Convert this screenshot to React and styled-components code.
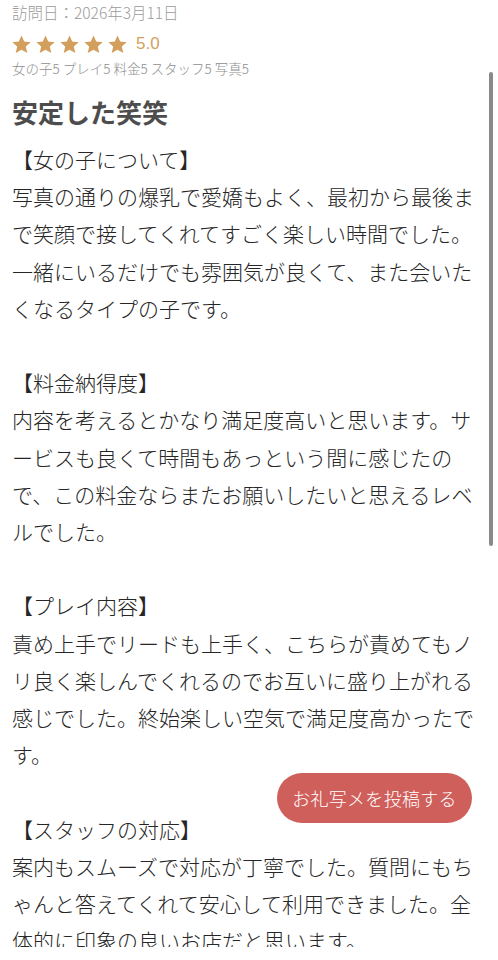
import React from "react";
import styled, { createGlobalStyle } from "styled-components";

const GlobalStyle = createGlobalStyle`
    html, body {
        margin: 0;
        padding: 0;
        background: #ffffff;
    }
    body {
        font-family: "Noto Sans CJK JP", "Noto Sans", sans-serif;
        overflow: hidden;
    }
`;

const Page = styled.div`
    padding: 2px 12px 0 12px;
    height: 958px;
    overflow: hidden;
`;

const VisitDate = styled.div`
    font-size: 15.5px;
    line-height: 20px;
    font-weight: 300;
    color: #9b9b9b;
`;

const RatingRow = styled.div`
    display: flex;
    align-items: center;
    height: 24px;
    margin-top: 10px;
`;

const Stars = styled.div`
    display: flex;
    gap: 3px;
    margin-left: -1px;
`;

const Score = styled.span`
    margin-left: 8px;
    font-family: "Liberation Sans", "Noto Sans CJK JP", sans-serif;
    font-size: 17px;
    color: #d29f5d;
`;

const SubRatings = styled.div`
    margin-top: 3px;
    font-size: 13.5px;
    line-height: 18px;
    font-weight: 300;
    color: #8e8e8e;
`;

const Title = styled.h2`
    margin: 17px 0 0 0;
    font-size: 26px;
    line-height: 36px;
    font-weight: 700;
    color: #4d4d4d;
`;

const Body = styled.div`
    margin-top: 11px;
    width: 474px;
    font-size: 21px;
    line-height: 37.2px;
    font-weight: 300;
    color: #262626;
    white-space: pre-wrap;
    line-break: normal;
`;

const ScrollIndicator = styled.div`
    position: fixed;
    top: 72px;
    right: 5px;
    width: 4px;
    height: 474px;
    border-radius: 2px;
    background: #8a8a8a;
`;

const PostButton = styled.button`
    position: fixed;
    right: 26px;
    bottom: 137px;
    width: 195px;
    height: 50px;
    border: none;
    border-radius: 25px;
    background: #cf5f5b;
    color: #ffffff;
    font-family: "Noto Sans CJK JP", sans-serif;
    font-size: 18px;
    font-weight: 300;
    letter-spacing: 0.3px;
    cursor: pointer;
`;

const BottomBar = styled.div`
    position: fixed;
    left: 0;
    right: 0;
    bottom: 0;
    height: 13px;
    background: #ffffff;
`;

const Star = () => (
    <svg width="21" height="21" viewBox="0 0 24 24">
        <path
            d="M12 1.8l3.1 6.9 7.4.7-5.6 5 1.7 7.4L12 17.9l-6.6 3.9 1.7-7.4-5.6-5 7.4-.7z"
            fill="#d29f5d"
        />
    </svg>
);

const review = `【女の子について】
写真の通りの爆乳で愛嬌もよく、最初から最後まで笑顔で接してくれてすごく楽しい時間でした。一緒にいるだけでも雰囲気が良くて、また会いたくなるタイプの子です。

【料金納得度】
内容を考えるとかなり満足度高いと思います。サービスも良くて時間もあっという間に感じたので、この料金ならまたお願いしたいと思えるレベルでした。

【プレイ内容】
責め上手でリードも上手く、こちらが責めてもノリ良く楽しんでくれるのでお互いに盛り上がれる感じでした。終始楽しい空気で満足度高かったです。

【スタッフの対応】
案内もスムーズで対応が丁寧でした。質問にもちゃんと答えてくれて安心して利用できました。全体的に印象の良いお店だと思います。`;

const App = () => {
    return (
        <>
            <GlobalStyle />
            <Page>
                <VisitDate>訪問日：2026年3月11日</VisitDate>
                <RatingRow>
                    <Stars>
                        {[0, 1, 2, 3, 4].map((i) => (
                            <Star key={i} />
                        ))}
                    </Stars>
                    <Score>5.0</Score>
                </RatingRow>
                <SubRatings>女の子5 プレイ5 料金5 スタッフ5 写真5</SubRatings>
                <Title>安定した笑笑</Title>
                <Body>{review}</Body>
            </Page>
            <ScrollIndicator />
            <PostButton>お礼写メを投稿する</PostButton>
            <BottomBar />
        </>
    );
};

export default App;
